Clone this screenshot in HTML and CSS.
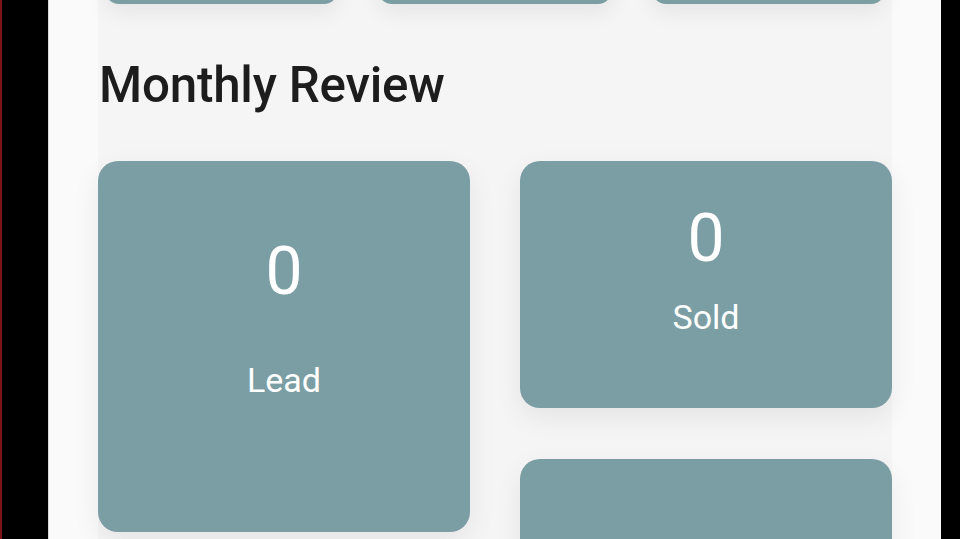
FILE: index.html
```html
<!DOCTYPE html>
<html lang="en">
<head>
<meta charset="utf-8">
<title>Monthly Review</title>
<link rel="stylesheet" href="styles.css">
</head>
<body>
<div class="frame">
  <main class="panel">
    <div class="column">
      <div class="top-row">
        <div class="mini-card"></div>
        <div class="mini-card"></div>
        <div class="mini-card"></div>
      </div>
      <h1 class="title">Monthly Review</h1>
      <div class="review-grid">
        <div class="col">
          <div class="stat-card stat-card--big">
            <div class="stat-value">0</div>
            <div class="stat-label stat-label--big">Lead</div>
          </div>
        </div>
        <div class="col">
          <div class="stat-card stat-card--small">
            <div class="stat-value">0</div>
            <div class="stat-label stat-label--small">Sold</div>
          </div>
          <div class="stat-card stat-card--small"></div>
        </div>
      </div>
    </div>
  </main>
</div>
</body>
</html>
```

FILE: styles.css
```css
html, body {
  margin: 0;
  padding: 0;
  height: 539px;
  overflow: hidden;
  background: #000;
}

.frame {
  display: flex;
  height: 539px;
  border-left: 2px solid #7a1518;
  padding-left: 46px;
  padding-right: 19px;
  box-sizing: border-box;
}

.panel {
  flex: 1;
  background: #fafafa;
  border-left: 1px solid #d8d8d8;
  padding: 0 49px 0 49px;
  overflow: hidden;
}

.column {
  display: flow-root;
  background: #f5f5f5;
  min-height: 100%;
  font-family: Roboto, "Liberation Sans", sans-serif;
}

.top-row {
  display: grid;
  grid-template-columns: repeat(3, 1fr);
  gap: 40px;
  padding: 0 7px;
  margin-top: -40px;
}

.mini-card {
  height: 44px;
  background: #7b9ea4;
  border-radius: 0 0 14px 14px;
  box-shadow: 0 8px 22px rgba(0, 0, 0, 0.07);
}

.title {
  margin: 56px 0 0 1px;
  font-size: 49.3px;
  line-height: 50px;
  font-weight: 500;
  color: #1d1d1d;
  letter-spacing: -0.2px;
}

.review-grid {
  display: flex;
  gap: 50px;
  margin-top: 51px;
}

.col {
  flex: 1;
  display: flex;
  flex-direction: column;
  gap: 51px;
}

.stat-card {
  background: #7b9ea4;
  border-radius: 20px;
  color: #fff;
  display: flex;
  flex-direction: column;
  align-items: center;
  box-shadow: 0 10px 28px rgba(0, 0, 0, 0.07);
  box-sizing: border-box;
}

.stat-card--big {
  height: 371px;
  padding-top: 78px;
}

.stat-card--small {
  height: 247px;
  padding-top: 45px;
}

.stat-value {
  font-size: 66px;
  line-height: 66px;
  font-weight: 400;
}

.stat-label {
  font-size: 34px;
  line-height: 34px;
  font-weight: 400;
}

.stat-label--big {
  margin-top: 58px;
}

.stat-label--small {
  margin-top: 28px;
}
```
